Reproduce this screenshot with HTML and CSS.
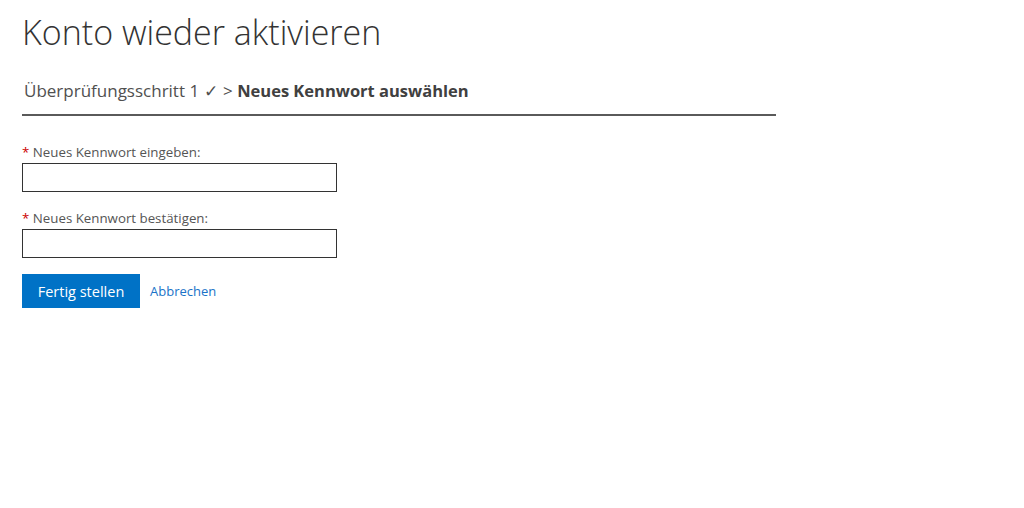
FILE: index.html
```html
<!DOCTYPE html>
<html lang="de">
  <head>
    <meta charset="UTF-8" />
    <meta name="viewport" content="width=device-width, initial-scale=1.0" />
    <title>Konto wieder aktivieren</title>
    <link rel="stylesheet" href="styles.css">
  </head>
  <body>
    <div class="page">
      <h1 class="title">Konto wieder aktivieren</h1>
      <div class="steps">
        <span class="step-done">Überprüfungsschritt 1 ✓</span>
        <span class="step-sep">&gt;</span>
        <span class="step-current">Neues Kennwort auswählen</span>
      </div>
      <form class="pw-form">
        <!-- neues Kennwort -->
        <div class="field">
          <label for="pw1"><span class="req">*</span> Neues Kennwort eingeben:</label>
          <input type="password" id="pw1" />
        </div>
        <!-- bestätigen -->
        <div class="field">
          <label for="pw2"><span class="req">*</span> Neues Kennwort bestätigen:</label>
          <input type="password" id="pw2" />
        </div>
        <div class="actions">
          <button type="submit">Fertig stellen</button>
          <a href="#" class="cancel">Abbrechen</a>
        </div>
      </form>
    </div>
  </body>
</html>
```

FILE: styles.css
```css
:root {
  --primary-color: #0072c6;
  --text-color: #333;
  --muted-color: #505050;
  --font-family: "Open Sans", "Noto Sans", sans-serif;
}
* {
  margin: 0;
  padding: 0;
  box-sizing: border-box;
}
body {
  background-color: #fff;
  font-family: var(--font-family);
  color: var(--text-color);
}
.page {
  width: 754px;
  margin-left: 22px;
  padding-top: 10px;
}
.title {
  font-size: 34px;
  font-weight: 300;
  line-height: 44px;
  color: #333;
}
.steps {
  margin-top: 25px;
  padding-bottom: 11px;
  border-bottom: 2px solid #5a5a5a;
  font-size: 17px;
  line-height: 24px;
  color: var(--muted-color);
}
.step-done {
  margin-left: 2px;
}
.step-sep {
  margin: 0 0 0 1px;
}
.step-current {
  font-size: 16.5px;
  font-weight: 700;
  color: #404040;
}
.pw-form {
  margin-top: 27px;
}
.field {
  display: flex;
  flex-direction: column;
  gap: 2px;
  margin-bottom: 17px;
}
label {
  font-size: 13.3px;
  line-height: 18px;
  color: #555;
}
.req {
  color: #c00;
}
input {
  width: 315px;
  height: 29px;
  border: 1px solid #333;
  font-size: 14px;
  padding: 4px 6px;
}
.actions {
  display: flex;
  align-items: center;
  gap: 10px;
  margin-top: -1px;
}
button {
  background-color: var(--primary-color);
  color: #fff;
  border: none;
  height: 34px;
  width: 118px;
  font-family: var(--font-family);
  font-size: 14.5px;
  cursor: pointer;
}
.cancel {
  color: #1a73c8;
  font-size: 13px;
  text-decoration: none;
}
```
